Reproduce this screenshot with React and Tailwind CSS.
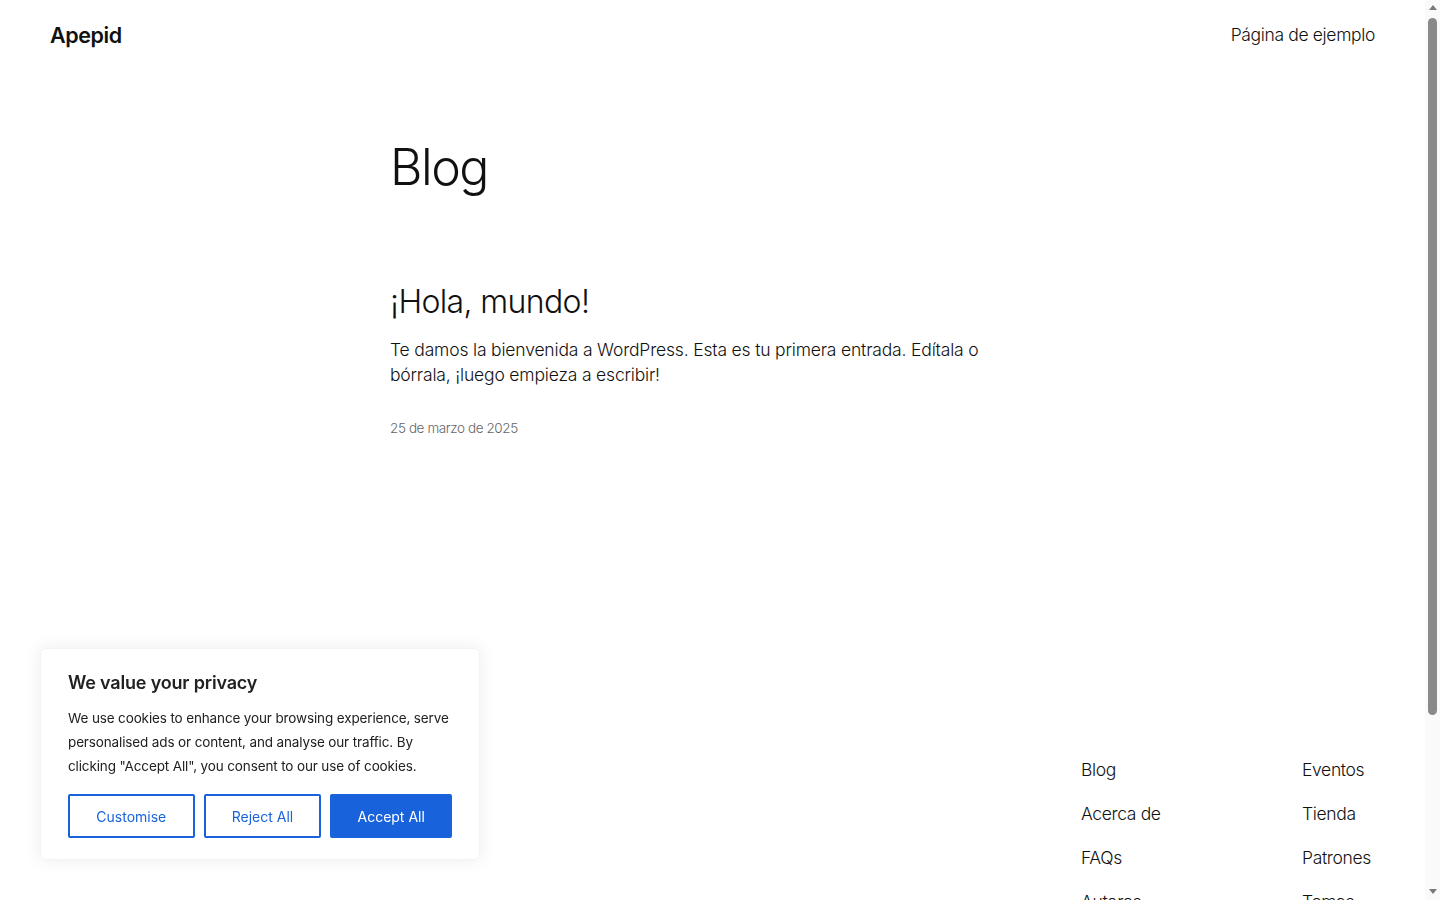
import React from "react";

const font = { fontFamily: "Inter, 'Noto Sans', sans-serif" };

function Header() {
  return (
    <header className="flex h-[70px] items-center justify-between px-[50px]">
      <a className="text-[21.5px] font-semibold tracking-[-0.02em] text-[#111]">Apepid</a>
      <nav>
        <a className="text-[17.5px] font-light text-[#111] tracking-[-0.02em]">Página de ejemplo</a>
      </nav>
    </header>
  );
}

function Post() {
  return (
    <article className="mt-[88px]">
      <h2 className="text-[32px] font-light leading-[1.2] tracking-[-0.02em] text-[#111]">¡Hola, mundo!</h2>
      <p className="mt-[16px] max-w-[600px] text-[17.5px] font-light leading-[25px] tracking-[-0.01em] text-[#111]">
        Te damos la bienvenida a WordPress. Esta es tu primera entrada. Edítala o bórrala, ¡luego empieza a escribir!
      </p>
      <p className="mt-[31px] text-[13.5px] font-light tracking-[-0.03em] text-[#666]">25 de marzo de 2025</p>
    </article>
  );
}

function Footer() {
  const cols = [
    ["Blog", "Acerca de", "FAQs", "Autores"],
    ["Eventos", "Tienda", "Patrones", "Temas"],
  ];
  return (
    <footer className="mt-[318px] flex justify-end px-[50px] pb-[180px]">
      <div className="flex">
        {cols.map((c, i) => (
          <ul key={i} className={i === 0 ? "w-[221px] flex flex-col gap-[19px]" : "w-[73px] flex flex-col gap-[19px]"}>
            {c.map((l) => (
              <li key={l} className="text-[17.5px] font-light leading-[25px] tracking-[-0.02em] text-[#111] whitespace-nowrap">{l}</li>
            ))}
          </ul>
        ))}
      </div>
    </footer>
  );
}

function CookieBanner() {
  return (
    <div className="fixed left-[40px] bottom-[40px] w-[440px] rounded-[6px] border border-[#f4f4f4] bg-white px-[27px] pt-[21px] pb-[21px] shadow-[0_0_18px_rgba(0,0,0,0.08)]">
      <p className="text-[18px] font-semibold leading-[26px] tracking-[-0.01em] text-[#212121]">We value your privacy</p>
      <p className="mt-[10px] text-[13.5px] leading-[24px] tracking-[-0.01em] text-[#212121]">
        We use cookies to enhance your browsing experience, serve personalised ads or content, and analyse our traffic. By clicking "Accept All", you consent to our use of cookies.
      </p>
      <div className="mt-[16px] flex gap-[9px]">
        <button className="h-[44px] w-[128px] rounded-[2px] border-2 border-[#1863dc] text-[14px] text-[#1863dc]">Customise</button>
        <button className="h-[44px] w-[119px] rounded-[2px] border-2 border-[#1863dc] text-[14px] text-[#1863dc]">Reject All</button>
        <button className="h-[44px] w-[123px] rounded-[2px] border-2 border-[#1863dc] bg-[#1863dc] text-[14px] text-white">Accept All</button>
      </div>
    </div>
  );
}

// the browser's classic scrollbar as it shows in the screenshot
function Scrollbar() {
  return (
    <div className="fixed right-0 top-0 flex h-screen w-[15px] flex-col items-center bg-[#fafafa]">
      <div className="mt-[5px] h-0 w-0 border-x-[4px] border-b-[5px] border-x-transparent border-b-[#7a7a7a]" />
      <div className="mt-[8px] h-[697px] w-[9px] rounded-[5px] bg-[#8a8a8a]" />
      <div className="flex-1" />
      <div className="mb-[6px] h-0 w-0 border-x-[4px] border-t-[5px] border-x-transparent border-t-[#7a7a7a]" />
    </div>
  );
}

export default function App() {
  return (
    <div className="h-screen overflow-y-auto bg-white pr-[15px] antialiased [scrollbar-width:none]" style={font}>
      <Header />
      <main className="mx-auto w-[645px] pt-[70px]">
        <h1 className="text-[50px] font-light leading-[1.1] tracking-[-0.03em] text-[#111]">Blog</h1>
        <Post />
      </main>
      <Footer />
      <CookieBanner />
      <Scrollbar />
    </div>
  );
}
